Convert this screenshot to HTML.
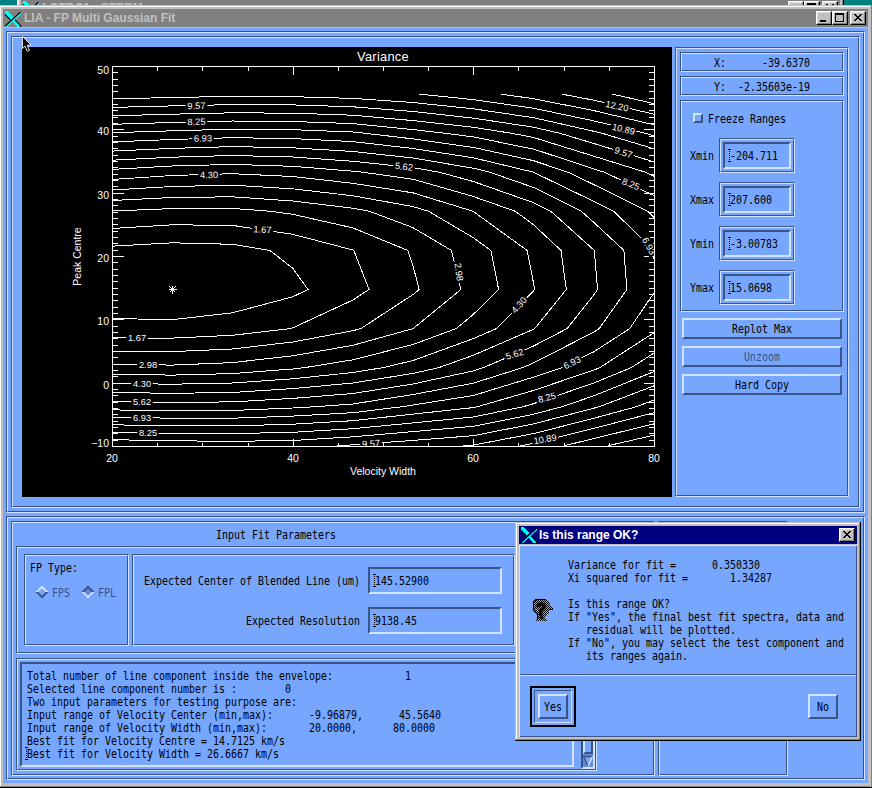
<!DOCTYPE html><html><head><meta charset="utf-8"><title>LIA - FP Multi Gaussian Fit</title><style>
html,body{margin:0;padding:0;}
body{width:872px;height:788px;overflow:hidden;position:relative;background:#76a6fe;font-family:"Liberation Sans",sans-serif;}
div,span{position:absolute;box-sizing:border-box;}
.fr{border:1px solid;border-color:#3b5488 #d3e2fe #d3e2fe #3b5488;}
.fr::after{content:"";position:absolute;left:0;top:0;right:0;bottom:0;border:1px solid;border-color:#d3e2fe #3b5488 #3b5488 #d3e2fe;}
.sunk{border:2px solid;border-color:#3b5488 #d3e2fe #d3e2fe #3b5488;}
.rais{border:2px solid;border-color:#d3e2fe #3b5488 #3b5488 #d3e2fe;}
.t{font-family:"DejaVu Sans Mono","Liberation Mono",monospace;font-size:12.3px;line-height:13px;white-space:pre;color:#000;transform:scaleX(.8103);transform-origin:0 0;}
.st{color:rgba(0,0,20,.55);}
.wt{font-family:"Liberation Sans",sans-serif;font-weight:bold;font-size:12px;line-height:18px;white-space:pre;}
.wb{background:#c0c0c0;border:1px solid;border-color:#fff #000 #000 #fff;box-shadow:inset -1px -1px 0 #808080, inset 1px 1px 0 #dfdfdf;}
svg{position:absolute;overflow:visible;}
.ib{width:1px;border-left:1px dotted #000;}
.ib::before{content:"";position:absolute;left:-2px;top:0;width:3px;height:1px;background:linear-gradient(90deg,#000 1px,transparent 1px,transparent 2px,#000 2px);}
.ib::after{content:"";position:absolute;left:-2px;bottom:0;width:3px;height:1px;background:linear-gradient(90deg,#000 1px,transparent 1px,transparent 2px,#000 2px);}
</style></head><body>
<div class="" style="left:0px;top:0px;width:17px;height:5px;background:#008080;"></div>
<div class="" style="left:17px;top:0px;width:2px;height:5px;background:#ffffff;"></div>
<div class="" style="left:19px;top:0px;width:2px;height:5px;background:#c0c0c0;"></div>
<div class="" style="left:21px;top:0px;width:819px;height:5px;background:#808080;"></div>
<div class="" style="left:840px;top:0px;width:2px;height:5px;background:#c0c0c0;"></div>
<div class="" style="left:842px;top:0px;width:1px;height:5px;background:#808080;"></div>
<div class="" style="left:843px;top:0px;width:1px;height:5px;background:#000;"></div>
<div class="" style="left:844px;top:0px;width:28px;height:5px;background:#008080;"></div>
<div style="left:21px;top:-1px;width:819px;height:6px;overflow:hidden;"><svg style="left:2px;top:2px" width="16" height="16" viewBox="0 0 17 17"><path d="M0,0 H2.8 L9,6.5 L6,9.3 L0,3.4 Z" fill="#00ffff"/><path d="M7.0,10 L10.2,8.6 L16.6,15.4 V17 H13 Z" fill="#00ffff"/><path d="M17,2.4 L1.4,16.8" stroke="#00ffff" stroke-width="1.5" fill="none"/><path d="M0,3.6 L5.6,9.2 M10.6,9.4 L16.5,15.4 V17" stroke="#000" stroke-width="1.3" fill="none"/><path d="M16.4,1.2 L0.4,15.8" stroke="#000" stroke-width="1.4" fill="none"/></svg><span class="wt" style="left:21px;top:0;color:#c0c0c0;font-size:12px">LOTDC1 - STERM</span><div class="wb" style="left:767px;top:2px;width:16px;height:14px"></div><div class="wb" style="left:783px;top:2px;width:16px;height:14px"></div><div class="wb" style="left:801px;top:2px;width:16px;height:14px"></div><div style="left:786px;top:4px;width:9px;height:9px;border:1px solid #000;border-top-width:2px"></div><svg style="left:805px;top:5px" width="8" height="7" viewBox="0 0 8 7"><path d="M0,0.5 h2 M6,0.5 h2" stroke="#000" stroke-width="1" shape-rendering="crispEdges"/></svg></div>
<div class="" style="left:0px;top:5px;width:872px;height:783px;background:#c0c0c0;"></div>
<div class="" style="left:0px;top:6px;width:870px;height:1px;background:#fff;"></div>
<div class="" style="left:0px;top:6px;width:1px;height:780px;background:#fff;"></div>
<div class="" style="left:871px;top:5px;width:1px;height:783px;background:#808080;"></div>
<div class="" style="left:0px;top:786px;width:872px;height:1px;background:#808080;"></div>
<div class="" style="left:0px;top:787px;width:872px;height:1px;background:#000;"></div>
<div class="" style="left:870px;top:6px;width:1px;height:781px;background:#c0c0c0;"></div>
<div class="" style="left:870px;top:6px;width:1px;height:1px;background:#c0c0c0;"></div>
<div class="" style="left:3px;top:9px;width:865px;height:18px;background:#808080;"></div>
<svg style="left:5px;top:11px" width="16" height="16" viewBox="0 0 17 17"><path d="M0,0 H2.8 L9,6.5 L6,9.3 L0,3.4 Z" fill="#00ffff"/><path d="M7.0,10 L10.2,8.6 L16.6,15.4 V17 H13 Z" fill="#00ffff"/><path d="M17,2.4 L1.4,16.8" stroke="#00ffff" stroke-width="1.5" fill="none"/><path d="M0,3.6 L5.6,9.2 M10.6,9.4 L16.5,15.4 V17" stroke="#000" stroke-width="1.3" fill="none"/><path d="M16.4,1.2 L0.4,15.8" stroke="#000" stroke-width="1.4" fill="none"/></svg>
<span class="wt" style="left:24px;top:9px;color:#c0c0c0;" id="mt">LIA - FP Multi Gaussian Fit</span>
<div class="wb" style="left:816px;top:11px;width:16px;height:14px"></div>
<div class="" style="left:820px;top:20px;width:6px;height:2px;background:#000;"></div>
<div class="wb" style="left:832px;top:11px;width:16px;height:14px"></div>
<div style="left:835px;top:13px;width:9px;height:9px;border:1px solid #000;border-top-width:2px"></div>
<div class="wb" style="left:850px;top:11px;width:16px;height:14px"></div>
<svg style="left:854px;top:14px" width="8" height="7" viewBox="0 0 8 7"><path d="M0,0.5 h2 M6,0.5 h2 M1,1.5 h2 M5,1.5 h2 M2,2.5 h4 M3,3.5 h2 M2,4.5 h4 M1,5.5 h2 M5,5.5 h2 M0,6.5 h2 M6,6.5 h2" stroke="#000" stroke-width="1" shape-rendering="crispEdges"/></svg>
<div class="" style="left:3px;top:28px;width:865px;height:755px;background:#76a6fe;"></div>
<div class="fr" style="left:6px;top:31px;width:859px;height:482px;"></div>
<div class="fr" style="left:11px;top:36px;width:849px;height:472px;"></div>
<div class="" style="left:22px;top:47px;width:650px;height:450px;background:#000;"></div>
<div class="fr" style="left:675px;top:47px;width:174px;height:450px;"></div>
<div class="fr" style="left:680px;top:52px;width:164px;height:20px;"></div>
<div class="fr" style="left:680px;top:76px;width:164px;height:20px;"></div>
<div class="fr" style="left:680px;top:100px;width:164px;height:212px;"></div>
<span class="t" style="left:714px;top:57px;">X:      -39.6370</span>
<span class="t" style="left:714px;top:81px;">Y:  -2.35603e-19</span>
<div class="rais" style="left:693px;top:113px;width:10px;height:10px;"></div>
<span class="t" style="left:708px;top:113px;">Freeze Ranges</span>
<div class="fr" style="left:719px;top:138px;width:76px;height:35px;"></div>
<div class="sunk" style="left:723px;top:142px;width:68px;height:27px;"></div>
<span class="t" style="left:690px;top:150px;">Xmin</span>
<span class="t" style="left:730px;top:150px;">-204.711</span>
<div class="ib" style="left:729px;top:149px;width:1px;height:13px;"></div>
<div class="fr" style="left:719px;top:182px;width:76px;height:35px;"></div>
<div class="sunk" style="left:723px;top:186px;width:68px;height:27px;"></div>
<span class="t" style="left:690px;top:194px;">Xmax</span>
<span class="t" style="left:730px;top:194px;">207.600</span>
<div class="ib" style="left:729px;top:193px;width:1px;height:13px;"></div>
<div class="fr" style="left:719px;top:226px;width:76px;height:35px;"></div>
<div class="sunk" style="left:723px;top:230px;width:68px;height:27px;"></div>
<span class="t" style="left:690px;top:238px;">Ymin</span>
<span class="t" style="left:730px;top:238px;">-3.00783</span>
<div class="ib" style="left:729px;top:237px;width:1px;height:13px;"></div>
<div class="fr" style="left:719px;top:270px;width:76px;height:35px;"></div>
<div class="sunk" style="left:723px;top:274px;width:68px;height:27px;"></div>
<span class="t" style="left:690px;top:282px;">Ymax</span>
<span class="t" style="left:730px;top:282px;">15.0698</span>
<div class="ib" style="left:729px;top:281px;width:1px;height:13px;"></div>
<div class="rais" style="left:682px;top:318px;width:160px;height:21px;"></div>
<span class="t " style="left:732px;top:323px;">Replot Max</span>
<div class="rais" style="left:682px;top:346px;width:160px;height:21px;"></div>
<span class="t st" style="left:744px;top:351px;">Unzoom</span>
<div class="rais" style="left:682px;top:374px;width:160px;height:21px;"></div>
<span class="t " style="left:735px;top:379px;">Hard Copy</span>
<div class="fr" style="left:6px;top:516px;width:859px;height:264px;"></div>
<div class="fr" style="left:11px;top:521px;width:644px;height:255px;"></div>
<div class="fr" style="left:658px;top:521px;width:130px;height:255px;"></div>
<span class="t" style="left:216px;top:529px;">Input Fit Parameters</span>
<div class="fr" style="left:16px;top:546px;width:520px;height:108px;"></div>
<div class="fr" style="left:24px;top:554px;width:105px;height:92px;"></div>
<div class="fr" style="left:132px;top:554px;width:383px;height:92px;"></div>
<span class="t" style="left:30px;top:562px;">FP Type:</span>
<svg style="left:35px;top:585px" width="14" height="14" viewBox="-7 -7 14 14"><path d="M-6.5,0 L0,-6.5 L6.5,0 L0,6.5 Z" fill="#76a6fe"/><path d="M-6.5,0 L0,-6.5 L6.5,0 L3.7,0 L0,-3.7 L-3.7,0 Z" fill="#d3e2fe"/><path d="M-6.5,0 L0,6.5 L6.5,0 L3.7,0 L0,3.7 L-3.7,0 Z" fill="#3b5488"/></svg>
<svg style="left:81px;top:585px" width="14" height="14" viewBox="-7 -7 14 14"><path d="M-6.5,0 L0,-6.5 L6.5,0 L0,6.5 Z" fill="#5f8ae0"/><path d="M-6.5,0 L0,-6.5 L6.5,0 L3.7,0 L0,-3.7 L-3.7,0 Z" fill="#3b5488"/><path d="M-6.5,0 L0,6.5 L6.5,0 L3.7,0 L0,3.7 L-3.7,0 Z" fill="#d3e2fe"/></svg>
<span class="t st" style="left:52px;top:587px;">FPS</span>
<span class="t st" style="left:98px;top:587px;">FPL</span>
<span class="t" style="left:144px;top:575px;">Expected Center of Blended Line (um)</span>
<span class="t" style="left:246px;top:615px;">Expected Resolution</span>
<div class="sunk" style="left:368px;top:567px;width:134px;height:27px;"></div>
<div class="sunk" style="left:368px;top:607px;width:134px;height:27px;"></div>
<span class="t" style="left:375px;top:575px;">145.52900</span>
<span class="t" style="left:375px;top:615px;">9138.45</span>
<div class="ib" style="left:374px;top:574px;width:1px;height:13px;"></div>
<div class="ib" style="left:374px;top:614px;width:1px;height:13px;"></div>
<div class="fr" style="left:16px;top:658px;width:581px;height:113px;"></div>
<div class="sunk" style="left:20px;top:662px;width:554px;height:105px;"></div>
<span class="t" style="left:27px;top:670px;">Total number of line component inside the envelope:            1</span>
<span class="t" style="left:27px;top:683px;">Selected line component number is :        0</span>
<span class="t" style="left:27px;top:696px;">Two input parameters for testing purpose are:</span>
<span class="t" style="left:27px;top:709px;">Input range of Velocity Center (min,max):      -9.96879,      45.5640</span>
<span class="t" style="left:27px;top:722px;">Input range of Velocity Width (min,max):       20.0000,      80.0000</span>
<span class="t" style="left:27px;top:735px;">Best fit for Velocity Centre = 14.7125 km/s</span>
<span class="t" style="left:27px;top:748px;">Best fit for Velocity Width = 26.6667 km/s</span>
<div class="ib" style="left:26px;top:747px;width:1px;height:13px;"></div>
<div class="sunk" style="left:581px;top:662px;width:14px;height:107px;background:#5f8ae0;"></div>
<div class="rais" style="left:583px;top:664px;width:10px;height:90px;background:#76a6fe;"></div>
<svg style="left:583px;top:756px" width="10" height="11" viewBox="0 0 10 11"><path d="M0,0 L10,0 L5,11 Z" fill="#76a6fe"/><path d="M0,0.5 L10,0.5 M0.5,0 L5,10.5" stroke="#3b5488" stroke-width="1.4" fill="none"/><path d="M9.5,0.5 L5,10.5" stroke="#d3e2fe" stroke-width="1.4" fill="none"/></svg>
<svg style="left:0;top:0" width="872" height="788" viewBox="0 0 872 788"><g fill="none" stroke="#fff" stroke-width="1" shape-rendering="crispEdges"><rect x="112.5" y="66.5" width="542" height="380"/><path d="M112.5,446.5 v-8 M112.5,66.5 v8 M157.5,446.5 v-4 M157.5,66.5 v4 M202.5,446.5 v-4 M202.5,66.5 v4 M248.5,446.5 v-4 M248.5,66.5 v4 M293.5,446.5 v-8 M293.5,66.5 v8 M338.5,446.5 v-4 M338.5,66.5 v4 M383.5,446.5 v-4 M383.5,66.5 v4 M428.5,446.5 v-4 M428.5,66.5 v4 M473.5,446.5 v-8 M473.5,66.5 v8 M518.5,446.5 v-4 M518.5,66.5 v4 M564.5,446.5 v-4 M564.5,66.5 v4 M609.5,446.5 v-4 M609.5,66.5 v4 M654.5,446.5 v-8 M654.5,66.5 v8 M112.5,446.5 h11 M654.5,446.5 h-11 M112.5,440.5 h5.5 M654.5,440.5 h-5.5 M112.5,433.5 h5.5 M654.5,433.5 h-5.5 M112.5,427.5 h5.5 M654.5,427.5 h-5.5 M112.5,421.5 h5.5 M654.5,421.5 h-5.5 M112.5,414.5 h5.5 M654.5,414.5 h-5.5 M112.5,408.5 h5.5 M654.5,408.5 h-5.5 M112.5,402.5 h5.5 M654.5,402.5 h-5.5 M112.5,395.5 h5.5 M654.5,395.5 h-5.5 M112.5,389.5 h5.5 M654.5,389.5 h-5.5 M112.5,383.5 h11 M654.5,383.5 h-11 M112.5,376.5 h5.5 M654.5,376.5 h-5.5 M112.5,370.5 h5.5 M654.5,370.5 h-5.5 M112.5,364.5 h5.5 M654.5,364.5 h-5.5 M112.5,357.5 h5.5 M654.5,357.5 h-5.5 M112.5,351.5 h5.5 M654.5,351.5 h-5.5 M112.5,345.5 h5.5 M654.5,345.5 h-5.5 M112.5,338.5 h5.5 M654.5,338.5 h-5.5 M112.5,332.5 h5.5 M654.5,332.5 h-5.5 M112.5,326.5 h5.5 M654.5,326.5 h-5.5 M112.5,319.5 h11 M654.5,319.5 h-11 M112.5,313.5 h5.5 M654.5,313.5 h-5.5 M112.5,307.5 h5.5 M654.5,307.5 h-5.5 M112.5,300.5 h5.5 M654.5,300.5 h-5.5 M112.5,294.5 h5.5 M654.5,294.5 h-5.5 M112.5,288.5 h5.5 M654.5,288.5 h-5.5 M112.5,281.5 h5.5 M654.5,281.5 h-5.5 M112.5,275.5 h5.5 M654.5,275.5 h-5.5 M112.5,269.5 h5.5 M654.5,269.5 h-5.5 M112.5,262.5 h5.5 M654.5,262.5 h-5.5 M112.5,256.5 h11 M654.5,256.5 h-11 M112.5,250.5 h5.5 M654.5,250.5 h-5.5 M112.5,243.5 h5.5 M654.5,243.5 h-5.5 M112.5,237.5 h5.5 M654.5,237.5 h-5.5 M112.5,231.5 h5.5 M654.5,231.5 h-5.5 M112.5,224.5 h5.5 M654.5,224.5 h-5.5 M112.5,218.5 h5.5 M654.5,218.5 h-5.5 M112.5,212.5 h5.5 M654.5,212.5 h-5.5 M112.5,205.5 h5.5 M654.5,205.5 h-5.5 M112.5,199.5 h5.5 M654.5,199.5 h-5.5 M112.5,193.5 h11 M654.5,193.5 h-11 M112.5,186.5 h5.5 M654.5,186.5 h-5.5 M112.5,180.5 h5.5 M654.5,180.5 h-5.5 M112.5,174.5 h5.5 M654.5,174.5 h-5.5 M112.5,167.5 h5.5 M654.5,167.5 h-5.5 M112.5,161.5 h5.5 M654.5,161.5 h-5.5 M112.5,155.5 h5.5 M654.5,155.5 h-5.5 M112.5,148.5 h5.5 M654.5,148.5 h-5.5 M112.5,142.5 h5.5 M654.5,142.5 h-5.5 M112.5,136.5 h5.5 M654.5,136.5 h-5.5 M112.5,129.5 h11 M654.5,129.5 h-11 M112.5,123.5 h5.5 M654.5,123.5 h-5.5 M112.5,117.5 h5.5 M654.5,117.5 h-5.5 M112.5,110.5 h5.5 M654.5,110.5 h-5.5 M112.5,104.5 h5.5 M654.5,104.5 h-5.5 M112.5,98.5 h5.5 M654.5,98.5 h-5.5 M112.5,91.5 h5.5 M654.5,91.5 h-5.5 M112.5,85.5 h5.5 M654.5,85.5 h-5.5 M112.5,79.5 h5.5 M654.5,79.5 h-5.5 M112.5,72.5 h5.5 M654.5,72.5 h-5.5 M112.5,66.5 h11 M654.5,66.5 h-11"/></g><g fill="none" stroke="#fff" stroke-width="1" shape-rendering="crispEdges"><path d="M112.0,246.2 L172.2,242.8 L232.4,244.3 L269.9,250.4 L292.7,268.2 L308.0,289.5 L292.7,296.8 L232.4,312.8 L172.2,319.7 L112.0,318.5"/><path d="M112.0,228.5 L172.2,224.8 L232.4,225.4 L292.7,234.3 L352.9,250.0 L353.8,250.4 L369.0,289.5 L352.9,300.0 L292.7,327.9 L290.2,328.6 L232.4,335.3 L172.2,338.1 L112.0,337.9"/><path d="M112.0,211.0 L172.2,208.6 L232.4,208.4 L270.5,211.3 L292.7,214.3 L352.9,227.9 L407.7,250.4 L413.1,266.2 L419.2,289.5 L413.1,294.5 L360.8,328.6 L352.9,330.7 L292.7,342.0 L232.4,349.0 L172.2,351.6 L112.0,351.0"/><path d="M112.0,200.5 L172.2,197.5 L232.4,196.8 L292.7,201.0 L352.9,208.2 L369.5,211.3 L413.1,227.7 L451.4,250.4 L460.9,289.5 L413.1,328.6 L413.1,328.6 L352.9,345.3 L292.7,355.8 L232.4,362.6 L172.2,365.1 L112.0,364.2"/><path d="M112.0,190.0 L172.2,186.5 L232.4,185.2 L292.7,188.8 L352.9,195.8 L413.1,206.6 L428.6,211.3 L473.3,237.7 L490.9,250.4 L498.6,289.5 L473.3,314.4 L456.2,328.6 L413.1,344.5 L352.9,359.8 L304.9,367.6 L292.7,369.0 L232.4,373.6 L172.2,375.1 L112.0,374.3"/><path d="M112.0,179.5 L172.2,175.5 L232.4,173.7 L292.7,176.5 L352.9,183.3 L413.1,192.9 L473.1,211.3 L473.3,211.5 L527.1,250.4 L533.6,283.5 L534.6,289.5 L533.6,290.8 L496.5,328.6 L473.3,338.6 L413.1,360.5 L383.3,367.6 L352.9,372.5 L292.7,378.8 L232.4,383.0 L172.2,384.2 L112.0,383.4"/><path d="M112.0,169.4 L172.2,166.0 L232.4,164.4 L292.7,166.3 L352.9,171.2 L363.4,172.3 L413.1,179.3 L473.3,196.5 L515.3,211.3 L533.6,224.8 L561.0,250.4 L566.3,289.5 L534.7,328.6 L533.6,329.2 L473.3,355.3 L438.9,367.6 L413.1,373.4 L352.9,383.0 L292.7,388.6 L232.4,392.5 L172.2,393.3 L112.0,392.5"/><path d="M112.0,160.2 L172.2,157.2 L232.4,155.5 L292.7,157.0 L352.9,161.3 L413.1,167.6 L439.7,172.3 L473.3,181.5 L533.6,202.7 L550.9,211.3 L593.8,249.9 L594.3,250.4 L597.6,289.5 L593.8,294.9 L567.1,328.6 L533.6,346.0 L483.5,367.6 L473.3,370.9 L413.1,384.0 L352.9,393.5 L292.7,398.4 L232.4,401.9 L172.2,402.4 L112.0,401.5"/><path d="M112.0,151.1 L172.2,148.4 L232.4,146.6 L292.7,147.8 L352.9,151.5 L413.1,158.0 L473.3,168.2 L490.0,172.3 L533.6,187.5 L581.4,211.3 L593.8,222.4 L623.9,250.4 L626.9,289.5 L599.2,328.6 L593.8,332.1 L533.6,362.9 L522.5,367.6 L473.3,383.2 L413.1,394.5 L352.9,404.0 L315.3,406.7 L292.7,408.0 L232.4,410.5 L172.2,410.7 L112.0,409.9"/><path d="M654.0,292.8 L629.7,328.6 L593.8,351.8 L561.9,367.6 L533.6,377.1 L473.3,395.5 L413.1,405.0 L402.2,406.7 L352.9,412.7 L292.7,416.1 L232.4,418.2 L172.2,418.2 L112.0,417.3"/><path d="M112.0,141.9 L172.2,139.5 L232.4,137.7 L292.7,138.6 L352.9,141.6 L413.1,148.5 L473.3,157.8 L533.6,172.2 L533.6,172.3 L593.8,201.4 L613.9,211.3 L653.4,250.4 L654.0,258.9"/><path d="M654.0,332.7 L599.8,367.6 L593.8,370.1 L533.6,390.4 L477.6,406.7 L473.3,407.6 L413.1,414.1 L352.9,420.7 L292.7,424.2 L232.4,425.9 L172.2,425.8 L112.0,424.8"/><path d="M112.0,132.7 L172.2,130.8 L232.4,129.2 L292.7,129.7 L352.9,132.0 L364.5,133.2 L413.1,138.9 L473.3,147.4 L533.6,160.7 L568.2,172.3 L593.8,184.6 L647.7,211.3 L654.0,217.6"/><path d="M654.0,353.0 L631.3,367.6 L593.8,383.0 L533.6,403.7 L523.1,406.7 L473.3,417.0 L413.1,422.9 L352.9,428.7 L292.7,432.3 L232.4,433.6 L172.2,433.3 L112.0,432.2"/><path d="M112.0,124.3 L172.2,122.5 L232.4,121.0 L292.7,121.5 L352.9,123.6 L413.1,129.6 L444.7,133.2 L473.3,136.9 L533.6,149.1 L593.8,168.9 L604.5,172.3 L654.0,195.6"/><path d="M654.0,371.6 L593.8,395.8 L562.2,406.7 L533.6,414.2 L473.3,426.3 L413.1,431.6 L352.9,436.8 L292.7,440.5 L232.4,441.3 L172.2,440.8 L112.0,439.7"/><path d="M112.0,115.8 L172.2,114.2 L232.4,112.8 L292.7,113.2 L352.9,115.2 L413.1,120.6 L473.3,127.3 L511.2,133.2 L533.6,137.5 L593.8,156.2 L645.7,172.3 L654.0,176.2"/><path d="M654.0,385.8 L599.3,406.7 L593.8,408.2 L533.6,423.9 L473.3,435.7 L413.1,440.4 L352.9,444.8 L336.8,445.8"/><path d="M112.0,107.4 L172.2,105.9 L232.4,104.6 L292.7,104.9 L352.9,106.8 L413.1,111.5 L473.3,118.1 L533.6,127.2 L559.6,133.2 L593.8,143.5 L654.0,161.9"/><path d="M654.0,400.0 L636.4,406.7 L593.8,418.3 L533.6,433.6 L473.3,445.1 L463.2,445.8"/><path d="M112.0,98.9 L172.2,97.5 L232.4,96.4 L292.7,96.7 L352.9,98.4 L413.1,102.5 L473.3,108.8 L533.6,117.7 L593.8,131.3 L601.8,133.2 L654.0,148.8"/><path d="M654.0,412.7 L593.8,428.4 L533.6,443.3 L520.4,445.8"/><path d="M419.1,94.1 L473.3,99.6 L533.6,108.2 L593.8,120.9 L645.2,133.2 L654.0,135.8"/><path d="M654.0,423.9 L593.8,438.5 L564.1,445.8"/><path d="M500.7,94.1 L533.6,98.7 L593.8,110.6 L654.0,124.8"/><path d="M654.0,435.2 L607.7,445.8"/><path d="M561.7,94.1 L593.8,100.2 L654.0,114.2"/><path d="M612.5,94.1 L654.0,103.6"/><path d="M168.5,289.5 h8 M172.5,285.5 v8 M169.5,286.5 l6,6 M175.5,286.5 l-6,6"/></g><clipPath id="pc"><rect x="113" y="67" width="541" height="379"/></clipPath><g clip-path="url(#pc)"><g transform="translate(196.5,105.7) rotate(-2)"><rect x="-10.8" y="-5" width="21.6" height="10" fill="#000"/><text x="0" y="3.3" text-anchor="middle" font-family="Liberation Sans, sans-serif" font-size="9.3" fill="#fff">9.57</text></g><g transform="translate(196.5,121.7) rotate(-2)"><rect x="-10.8" y="-5" width="21.6" height="10" fill="#000"/><text x="0" y="3.3" text-anchor="middle" font-family="Liberation Sans, sans-serif" font-size="9.3" fill="#fff">8.25</text></g><g transform="translate(203,138.2) rotate(-2)"><rect x="-10.8" y="-5" width="21.6" height="10" fill="#000"/><text x="0" y="3.3" text-anchor="middle" font-family="Liberation Sans, sans-serif" font-size="9.3" fill="#fff">6.93</text></g><g transform="translate(209,174.8) rotate(-1)"><rect x="-10.8" y="-5" width="21.6" height="10" fill="#000"/><text x="0" y="3.3" text-anchor="middle" font-family="Liberation Sans, sans-serif" font-size="9.3" fill="#fff">4.30</text></g><g transform="translate(262.5,229.5) rotate(3)"><rect x="-10.8" y="-5" width="21.6" height="10" fill="#000"/><text x="0" y="3.3" text-anchor="middle" font-family="Liberation Sans, sans-serif" font-size="9.3" fill="#fff">1.67</text></g><g transform="translate(404,166.5) rotate(6)"><rect x="-10.8" y="-5" width="21.6" height="10" fill="#000"/><text x="0" y="3.3" text-anchor="middle" font-family="Liberation Sans, sans-serif" font-size="9.3" fill="#fff">5.62</text></g><g transform="translate(617,106) rotate(12)"><rect x="-13.1" y="-5" width="26.2" height="10" fill="#000"/><text x="0" y="3.3" text-anchor="middle" font-family="Liberation Sans, sans-serif" font-size="9.3" fill="#fff">12.20</text></g><g transform="translate(623.5,129) rotate(14)"><rect x="-13.1" y="-5" width="26.2" height="10" fill="#000"/><text x="0" y="3.3" text-anchor="middle" font-family="Liberation Sans, sans-serif" font-size="9.3" fill="#fff">10.89</text></g><g transform="translate(623.5,152.5) rotate(18)"><rect x="-10.8" y="-5" width="21.6" height="10" fill="#000"/><text x="0" y="3.3" text-anchor="middle" font-family="Liberation Sans, sans-serif" font-size="9.3" fill="#fff">9.57</text></g><g transform="translate(631,184) rotate(22)"><rect x="-10.8" y="-5" width="21.6" height="10" fill="#000"/><text x="0" y="3.3" text-anchor="middle" font-family="Liberation Sans, sans-serif" font-size="9.3" fill="#fff">8.25</text></g><g transform="translate(649,246) rotate(62)"><rect x="-10.8" y="-5" width="21.6" height="10" fill="#000"/><text x="0" y="3.3" text-anchor="middle" font-family="Liberation Sans, sans-serif" font-size="9.3" fill="#fff">6.93</text></g><g transform="translate(459,272) rotate(82)"><rect x="-10.8" y="-5" width="21.6" height="10" fill="#000"/><text x="0" y="3.3" text-anchor="middle" font-family="Liberation Sans, sans-serif" font-size="9.3" fill="#fff">2.98</text></g><g transform="translate(519,305) rotate(-48)"><rect x="-10.8" y="-5" width="21.6" height="10" fill="#000"/><text x="0" y="3.3" text-anchor="middle" font-family="Liberation Sans, sans-serif" font-size="9.3" fill="#fff">4.30</text></g><g transform="translate(514.5,354) rotate(-16)"><rect x="-10.8" y="-5" width="21.6" height="10" fill="#000"/><text x="0" y="3.3" text-anchor="middle" font-family="Liberation Sans, sans-serif" font-size="9.3" fill="#fff">5.62</text></g><g transform="translate(572,362.5) rotate(-27)"><rect x="-10.8" y="-5" width="21.6" height="10" fill="#000"/><text x="0" y="3.3" text-anchor="middle" font-family="Liberation Sans, sans-serif" font-size="9.3" fill="#fff">6.93</text></g><g transform="translate(547,397.5) rotate(-15)"><rect x="-10.8" y="-5" width="21.6" height="10" fill="#000"/><text x="0" y="3.3" text-anchor="middle" font-family="Liberation Sans, sans-serif" font-size="9.3" fill="#fff">8.25</text></g><g transform="translate(545,439) rotate(-10)"><rect x="-13.1" y="-5" width="26.2" height="10" fill="#000"/><text x="0" y="3.3" text-anchor="middle" font-family="Liberation Sans, sans-serif" font-size="9.3" fill="#fff">10.89</text></g><g transform="translate(371,443.5) rotate(-3)"><rect x="-10.8" y="-5" width="21.6" height="10" fill="#000"/><text x="0" y="3.3" text-anchor="middle" font-family="Liberation Sans, sans-serif" font-size="9.3" fill="#fff">9.57</text></g><g transform="translate(137,338) rotate(0)"><rect x="-10.8" y="-5" width="21.6" height="10" fill="#000"/><text x="0" y="3.3" text-anchor="middle" font-family="Liberation Sans, sans-serif" font-size="9.3" fill="#fff">1.67</text></g><g transform="translate(148,364.7) rotate(0)"><rect x="-10.8" y="-5" width="21.6" height="10" fill="#000"/><text x="0" y="3.3" text-anchor="middle" font-family="Liberation Sans, sans-serif" font-size="9.3" fill="#fff">2.98</text></g><g transform="translate(142,383.2) rotate(0)"><rect x="-10.8" y="-5" width="21.6" height="10" fill="#000"/><text x="0" y="3.3" text-anchor="middle" font-family="Liberation Sans, sans-serif" font-size="9.3" fill="#fff">4.30</text></g><g transform="translate(142,401.5) rotate(0)"><rect x="-10.8" y="-5" width="21.6" height="10" fill="#000"/><text x="0" y="3.3" text-anchor="middle" font-family="Liberation Sans, sans-serif" font-size="9.3" fill="#fff">5.62</text></g><g transform="translate(142,417.5) rotate(0)"><rect x="-10.8" y="-5" width="21.6" height="10" fill="#000"/><text x="0" y="3.3" text-anchor="middle" font-family="Liberation Sans, sans-serif" font-size="9.3" fill="#fff">6.93</text></g><g transform="translate(148,432.7) rotate(0)"><rect x="-10.8" y="-5" width="21.6" height="10" fill="#000"/><text x="0" y="3.3" text-anchor="middle" font-family="Liberation Sans, sans-serif" font-size="9.3" fill="#fff">8.25</text></g></g><text x="383" y="61" text-anchor="middle" font-family="Liberation Sans, sans-serif" font-size="12.8" fill="#fff" letter-spacing="0.3">Variance</text><text x="383" y="475" text-anchor="middle" font-family="Liberation Sans, sans-serif" font-size="10.5" fill="#fff" >Velocity Width</text><text transform="translate(80.5,256.5) rotate(-90)" text-anchor="middle" font-family="Liberation Sans, sans-serif" font-size="10.5" fill="#fff">Peak Centre</text><text x="112" y="462" text-anchor="middle" font-family="Liberation Sans, sans-serif" font-size="10.5" fill="#fff" >20</text><text x="293" y="462" text-anchor="middle" font-family="Liberation Sans, sans-serif" font-size="10.5" fill="#fff" >40</text><text x="473" y="462" text-anchor="middle" font-family="Liberation Sans, sans-serif" font-size="10.5" fill="#fff" >60</text><text x="654" y="462" text-anchor="middle" font-family="Liberation Sans, sans-serif" font-size="10.5" fill="#fff" >80</text><text x="109" y="447" text-anchor="end" font-family="Liberation Sans, sans-serif" font-size="10.5" fill="#fff" >−10</text><text x="109" y="388.5" text-anchor="end" font-family="Liberation Sans, sans-serif" font-size="10.5" fill="#fff" >0</text><text x="109" y="324.5" text-anchor="end" font-family="Liberation Sans, sans-serif" font-size="10.5" fill="#fff" >10</text><text x="109" y="261.5" text-anchor="end" font-family="Liberation Sans, sans-serif" font-size="10.5" fill="#fff" >20</text><text x="109" y="198.5" text-anchor="end" font-family="Liberation Sans, sans-serif" font-size="10.5" fill="#fff" >30</text><text x="109" y="134.5" text-anchor="end" font-family="Liberation Sans, sans-serif" font-size="10.5" fill="#fff" >40</text><text x="109" y="74" text-anchor="end" font-family="Liberation Sans, sans-serif" font-size="10.5" fill="#fff" >50</text></svg>
<svg style="left:22px;top:36px" width="10.5" height="16.6" viewBox="0 0 12 19"><path d="M0.5,0.5 L0.5,14.5 L3.5,11.5 L6,17.5 L8.5,16.5 L6,10.5 L10.5,10.5 Z" fill="#000" stroke="#fff" stroke-width="1"/></svg>
<div class="" style="left:515px;top:522px;width:346px;height:219px;background:#c0c0c0;"></div>
<div class="" style="left:516px;top:523px;width:343px;height:1px;background:#fff;"></div>
<div class="" style="left:516px;top:523px;width:1px;height:216px;background:#fff;"></div>
<div class="" style="left:859px;top:523px;width:1px;height:217px;background:#808080;"></div>
<div class="" style="left:516px;top:739px;width:344px;height:1px;background:#808080;"></div>
<div class="" style="left:860px;top:522px;width:1px;height:219px;background:#000;"></div>
<div class="" style="left:515px;top:740px;width:346px;height:1px;background:#000;"></div>
<div class="" style="left:519px;top:526px;width:338px;height:18px;background:#000080;"></div>
<svg style="left:521px;top:527px" width="16" height="16" viewBox="0 0 17 17"><path d="M0,0 H2.8 L9,6.5 L6,9.3 L0,3.4 Z" fill="#00ffff"/><path d="M7.0,10 L10.2,8.6 L16.6,15.4 V17 H13 Z" fill="#00ffff"/><path d="M17,2.4 L1.4,16.8" stroke="#00ffff" stroke-width="1.5" fill="none"/><path d="M0,3.6 L5.6,9.2 M10.6,9.4 L16.5,15.4 V17" stroke="#000" stroke-width="1.3" fill="none"/><path d="M16.4,1.2 L0.4,15.8" stroke="#000" stroke-width="1.4" fill="none"/></svg>
<span class="wt" style="left:539px;top:526px;color:#fff;" id="dt">Is this range OK?</span>
<div class="wb" style="left:839px;top:528px;width:16px;height:14px"></div>
<svg style="left:843px;top:531px" width="8" height="7" viewBox="0 0 8 7"><path d="M0,0.5 h2 M6,0.5 h2 M1,1.5 h2 M5,1.5 h2 M2,2.5 h4 M3,3.5 h2 M2,4.5 h4 M1,5.5 h2 M5,5.5 h2 M0,6.5 h2 M6,6.5 h2" stroke="#000" stroke-width="1" shape-rendering="crispEdges"/></svg>
<div class="" style="left:519px;top:545px;width:338px;height:192px;background:#76a6fe;"></div>
<div class="" style="left:519px;top:545px;width:338px;height:1px;background:#d3e2fe;"></div>
<div class="" style="left:519px;top:545px;width:1px;height:192px;background:#d3e2fe;"></div>
<div class="" style="left:856px;top:546px;width:1px;height:191px;background:#3b5488;"></div>
<div class="" style="left:520px;top:736px;width:337px;height:1px;background:#3b5488;"></div>
<span class="t" style="left:568px;top:559px;">Variance for fit =      0.350330</span>
<span class="t" style="left:568px;top:572px;">Xi squared for fit =       1.34287</span>
<span class="t" style="left:568px;top:598px;">Is this range OK?</span>
<span class="t" style="left:568px;top:611px;">If "Yes", the final best fit spectra, data and</span>
<span class="t" style="left:568px;top:624px;">   residual will be plotted.</span>
<span class="t" style="left:568px;top:637px;">If "No", you may select the test component and</span>
<span class="t" style="left:568px;top:650px;">   its ranges again.</span>
<div class="" style="left:520px;top:674px;width:336px;height:1px;background:#3b5488;"></div>
<div class="" style="left:520px;top:675px;width:336px;height:1px;background:#d3e2fe;"></div>
<svg style="left:533px;top:599px" width="22" height="23" viewBox="0 0 22 23" shape-rendering="crispEdges"><defs><pattern id="stp" width="2" height="2" patternUnits="userSpaceOnUse"><rect width="2" height="2" fill="#76a6fe"/><rect width="1" height="1" fill="#000"/><rect x="1" y="1" width="1" height="1" fill="#000"/></pattern></defs><path d="M3,0 L13,0 L17,5 L17,6 L20,9 L20,11 L16,11 L16,14 L13,18 L12,18 L12,20 L14,22 L3,22 L3,21 L4,20 L4,15 L0,11 L0,3 Z" fill="url(#stp)"/><path d="M3,0.5 H13 M0.5,3 V11 M16,10.5 H20 M4.5,15 V20" stroke="#000" stroke-width="1" fill="none"/><path d="M3.5,0 L0,3.5 M0,10.5 L4.5,15" stroke="#000" stroke-width="1.4" fill="none" shape-rendering="auto"/><text x="8.2" y="15.6" text-anchor="middle" font-family="Liberation Sans, sans-serif" font-weight="bold" font-size="16" fill="#000" stroke="#000" stroke-width="1.3" stroke-linejoin="round">?</text><path d="M8.5,17 L10.5,19 L8.5,21 L6.5,19 Z" fill="#000" shape-rendering="auto"/></svg>
<div class="" style="left:530px;top:686px;width:46px;height:41px;border:2px solid #000;"></div>
<div class="" style="left:534px;top:690px;width:38px;height:33px;border:1px solid;border-color:#3b5488 #d3e2fe #d3e2fe #3b5488;"></div>
<div class="rais" style="left:538px;top:694px;width:30px;height:25px;"></div>
<span class="t" style="left:544px;top:701px;">Yes</span>
<div class="rais" style="left:808px;top:694px;width:30px;height:25px;"></div>
<span class="t" style="left:817px;top:701px;">No</span>
</body></html>
